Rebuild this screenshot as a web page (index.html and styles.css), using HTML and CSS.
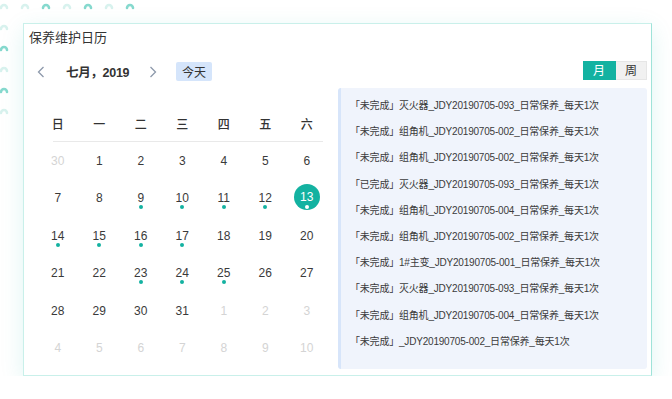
FILE: index.html
```html
<!DOCTYPE html>
<html lang="zh-CN">
<head>
    <meta charset="UTF-8">
    <meta name="viewport" content="width=device-width, initial-scale=1.0">
    <title>保养维护日历</title>
    <link rel="stylesheet" href="styles.css">
</head>
<body>
    <!-- 背景装饰 -->
    <svg class="deco" width="150" height="125" viewBox="0 0 150 125">
        <g fill="none" stroke-width="2.6" stroke-linecap="round">
            <path class="dim" d="M1 8 A3 3 0 0 1 7 8"/>
            <path class="dim" d="M22 8 A3 3 0 0 1 28 8"/>
            <path class="lit" d="M43 8 A3 3 0 0 1 49 8"/>
            <path class="dim" d="M64 8 A3 3 0 0 1 70 8"/>
            <path class="lit" d="M85 8 A3 3 0 0 1 91 8"/>
            <path class="dim" d="M106 8 A3 3 0 0 1 112 8"/>
            <path class="lit" d="M127 8 A3 3 0 0 1 133 8"/>
            <path class="dim" d="M1 29 A3 3 0 0 1 7 29"/>
            <path class="lit" d="M1 50 A3 3 0 0 1 7 50"/>
            <path class="dim" d="M1 71 A3 3 0 0 1 7 71"/>
            <path class="lit" d="M1 92 A3 3 0 0 1 7 92"/>
            <path class="dim" d="M1 113 A3 3 0 0 1 7 113"/>
        </g>
    </svg>

    <div class="card">
        <div class="card-title">保养维护日历</div>
        <div class="card-body">
            <div class="calendar">
                <div class="cal-head">
                    <span class="nav prev">
                        <svg width="8" height="12" viewBox="0 0 8 12"><path d="M6.5 1 L1.5 6 L6.5 11" fill="none" stroke="#8d99ab" stroke-width="1.3"/></svg>
                    </span>
                    <span class="month">七月，2019</span>
                    <span class="nav next">
                        <svg width="8" height="12" viewBox="0 0 8 12"><path d="M1.5 1 L6.5 6 L1.5 11" fill="none" stroke="#8d99ab" stroke-width="1.3"/></svg>
                    </span>
                    <button class="today">今天</button>
                </div>

                <div class="weekdays">
                    <span>日</span><span>一</span><span>二</span><span>三</span><span>四</span><span>五</span><span>六</span>
                </div>
                <div class="divider"></div>

                <div class="days">
                    <span class="day other">30</span><span class="day">1</span><span class="day">2</span><span class="day">3</span><span class="day">4</span><span class="day">5</span><span class="day">6</span>
                    <span class="day">7</span><span class="day">8</span><span class="day mark">9</span><span class="day mark">10</span><span class="day mark">11</span><span class="day mark">12</span><span class="day mark active"><i>13</i></span>
                    <span class="day mark">14</span><span class="day mark">15</span><span class="day mark">16</span><span class="day mark">17</span><span class="day">18</span><span class="day">19</span><span class="day">20</span>
                    <span class="day">21</span><span class="day">22</span><span class="day mark">23</span><span class="day mark">24</span><span class="day mark">25</span><span class="day">26</span><span class="day">27</span>
                    <span class="day">28</span><span class="day">29</span><span class="day">30</span><span class="day">31</span><span class="day other">1</span><span class="day other">2</span><span class="day other">3</span>
                    <span class="day other">4</span><span class="day other">5</span><span class="day other">6</span><span class="day other">7</span><span class="day other">8</span><span class="day other">9</span><span class="day other">10</span>
                </div>
            </div>

            <div class="schedule">
                <div class="switch">
                    <span class="on">月</span><span>周</span>
                </div>
                <ul class="tasks">
                    <li>「未完成」灭火器_JDY20190705-093_日常保养_每天1次</li>
                    <li>「未完成」组角机_JDY20190705-002_日常保养_每天1次</li>
                    <li>「未完成」组角机_JDY20190705-002_日常保养_每天1次</li>
                    <li>「已完成」灭火器_JDY20190705-093_日常保养_每天1次</li>
                    <li>「未完成」组角机_JDY20190705-004_日常保养_每天1次</li>
                    <li>「未完成」组角机_JDY20190705-002_日常保养_每天1次</li>
                    <li>「未完成」1#主变_JDY20190705-001_日常保养_每天1次</li>
                    <li>「未完成」灭火器_JDY20190705-093_日常保养_每天1次</li>
                    <li>「未完成」组角机_JDY20190705-004_日常保养_每天1次</li>
                    <li>「未完成」_JDY20190705-002_日常保养_每天1次</li>
                </ul>
            </div>
        </div>
    </div>
</body>
</html>
```

FILE: styles.css
```css
:root {
    --teal: #13b2a1;
    --text: #333;
    --muted: #d4d4d4;
    --panel: #f0f4fc;
    --panel-edge: #d7e5fa;
}

* {
    margin: 0;
    padding: 0;
    box-sizing: border-box;
    font-family: 'Liberation Sans', 'Noto Sans CJK SC', sans-serif;
}

body {
    background: #fff;
    color: var(--text);
    padding: 23px 0 0 23px;
}

.deco {
    position: absolute;
    left: 0;
    top: 0;
}

.deco .lit {
    stroke: #86d9ce;
}

.deco .dim {
    stroke: #d8f2ee;
}

.card {
    position: relative;
    width: 629px;
    height: 353px;
    background: #fff;
    border: 1px solid #c9f0ea;
    border-right-color: #9fe3d9;
    box-shadow: 0 6px 22px rgba(19, 178, 161, 0.13);
}

.card-title {
    font-size: 13px;
    line-height: 20px;
    padding: 4px 0 0 5px;
}

.card-body {
    display: flex;
}

/* 日历 */
.calendar {
    width: 314px;
}

.cal-head {
    display: flex;
    align-items: center;
    height: 19px;
    margin-top: 14px;
    padding-left: 13px;
}

.nav {
    display: flex;
    width: 8px;
}

.month {
    font-size: 12.5px;
    font-weight: 600;
    letter-spacing: -0.3px;
    white-space: nowrap;
    margin: 0 23px 0 21px;
    width: 60px;
}

.today {
    margin-left: 19px;
    width: 36px;
    height: 19px;
    border: none;
    border-radius: 2px;
    background: #d5e5fb;
    color: var(--text);
    font-size: 12px;
}

.weekdays,
.days {
    display: grid;
    grid-template-columns: repeat(7, 41.5px);
    margin-left: 13px;
}

.weekdays {
    margin-top: 24px;
    height: 36px;
    align-items: center;
    text-align: center;
    font-size: 12px;
    font-weight: 500;
}

.divider {
    height: 1px;
    background: #e9e9e9;
    margin: 0 15px 0 29px;
}

.days {
    grid-auto-rows: 37.5px;
}

.day {
    position: relative;
    display: flex;
    align-items: center;
    justify-content: center;
    font-size: 12px;
    color: #3a3a3a;
}

.day.other {
    color: var(--muted);
}

.day.mark::after {
    content: '';
    position: absolute;
    left: 50%;
    top: 50%;
    width: 4px;
    height: 4px;
    margin: 7px 0 0 -2px;
    border-radius: 50%;
    background: var(--teal);
}

.day.active i {
    font-style: normal;
    display: flex;
    align-items: center;
    justify-content: center;
    width: 26px;
    height: 26px;
    margin-top: -2px;
    border-radius: 50%;
    background: var(--teal);
    color: #fff;
}

.day.active::after {
    background: #fff;
    z-index: 1;
}

/* 右侧列表 */
.schedule {
    flex: 1;
    padding-right: 4px;
    display: flex;
    flex-direction: column;
    align-items: flex-end;
}

.switch {
    display: flex;
    margin-top: 13px;
    height: 19px;
    font-size: 12px;
    line-height: 19px;
    text-align: center;
}

.switch span {
    width: 31px;
    background: #f1f1f1;
    border: 1px solid #e6e6e6;
    border-left: none;
}

.switch .on {
    width: 33px;
    background: var(--teal);
    border-color: var(--teal);
    color: #fff;
}

.tasks {
    list-style: none;
    width: 100%;
    height: 281px;
    margin-top: 8px;
    padding: 5px 0 0 9px;
    background: var(--panel);
    border-left: 3px solid var(--panel-edge);
    border-radius: 3px;
}

.tasks li {
    font-size: 10px;
    line-height: 26.2px;
    letter-spacing: -0.2px;
    color: #3b3b3b;
    white-space: nowrap;
}
```
